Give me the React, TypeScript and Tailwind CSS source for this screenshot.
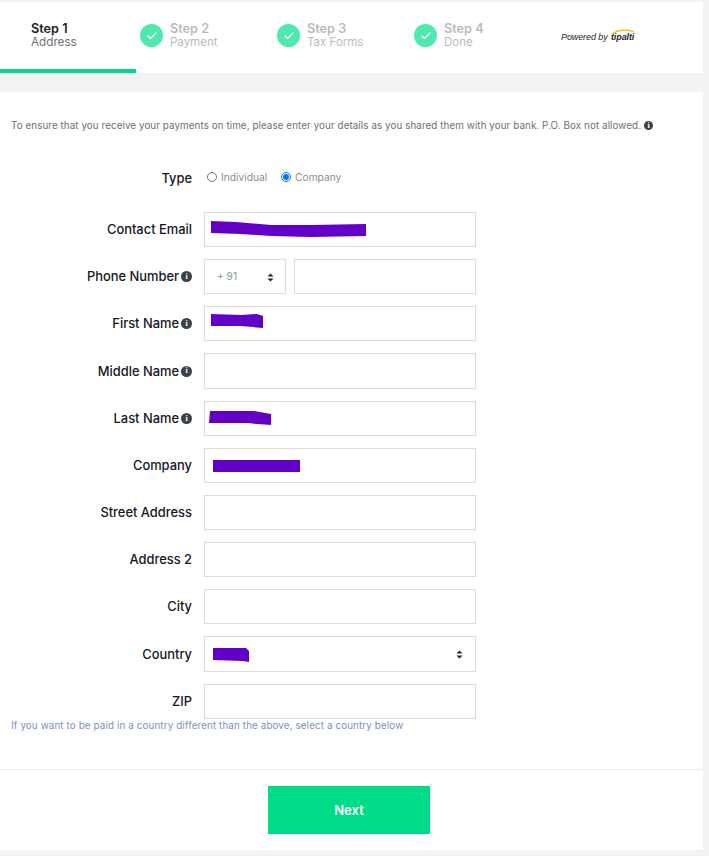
import React from 'react';
import { Check } from 'lucide-react';

const font = "font-['Inter',sans-serif]";

const InfoDot = ({ className = 'w-[11px] h-[11px]' }: { className?: string }) => (
  <span className={`inline-flex rounded-full bg-[#3d4048] items-center justify-center text-white text-[8px] leading-none font-bold font-['Liberation_Serif',serif] ${className}`}>i</span>
);

const Updown = () => (
  <svg width="7" height="9" viewBox="0 0 7 9" className="shrink-0">
    <path d="M3.5 0.5 L6.5 3.6 H0.5 Z M3.5 8.5 L6.5 5.4 H0.5 Z" fill="#1f2329" />
  </svg>
);

const Scribble = ({ d, w, left, top }: { d: string; w: number; left: number; top: number }) => (
  <svg width={w} height="18" viewBox={`0 0 ${w} 18`} className="absolute" style={{ left, top }}>
    <path d={d} fill="#6200c8" />
  </svg>
);

const steps = [
  { title: 'Step 2', sub: 'Payment' },
  { title: 'Step 3', sub: 'Tax Forms' },
  { title: 'Step 4', sub: 'Done' },
];

type RowProps = {
  label: string;
  info?: boolean;
  tall?: boolean;
  children?: React.ReactNode;
};

const Row = ({ label, info, tall, children }: RowProps) => (
  <div className={`flex items-center mb-3 ${tall ? 'h-[36px]' : 'h-[35px]'}`}>
    <div className="w-[192px] shrink-0 pt-[1px] flex items-center justify-end gap-[2px] text-[12.9px] font-[550] text-[#14171f]">
      {label}
      {info && <InfoDot />}
    </div>
    <div className="ml-3 w-[272px] h-full flex gap-2">{children}</div>
  </div>
);

const Box = ({ children }: { children?: React.ReactNode }) => (
  <div className="relative flex-1 h-full border border-[#dcdcdc] bg-white">{children}</div>
);

export default function App() {
  return (
    <div className={`${font} w-[709px] h-[856px] bg-[#f3f3f3] pt-[2px] overflow-hidden`}>
      <div className="w-[703px] h-[71px] bg-white flex relative">
        <div className="w-[136px] h-[71px] border-b-4 border-[#00db87] pl-[31px] pt-[20px]">
          <div className="text-[12.7px] leading-[14px] font-semibold text-[#1d2027]">Step 1</div>
          <div className="text-[11.7px] leading-[13px] text-[#6c7078]">Address</div>
        </div>
        {steps.map((s) => (
          <div key={s.title} className="w-[137px] pl-[4px] pt-[22px] flex">
            <div className="w-[23px] h-[23px] rounded-full bg-[#4fe8ae] flex items-center justify-center">
              <Check size={12} color="#fff" strokeWidth={2.5} />
            </div>
            <div className="ml-[7px] -mt-[2px]">
              <div className="text-[12.7px] leading-[14px] font-semibold text-[#b9bbc0]">{s.title}</div>
              <div className="text-[11.5px] leading-[13px] text-[#b9bbc0]">{s.sub}</div>
            </div>
          </div>
        ))}
        <div className="relative ml-[14px] pt-[30px]">
          <span className="font-['Liberation_Sans',sans-serif] italic text-[9px] leading-[11px] tracking-[-0.1px] text-[#1a1f2b] whitespace-nowrap block">
            Powered by <span className="font-bold ml-[1px]">tipalti</span>
          </span>
          <svg width="24" height="6" viewBox="0 0 24 6" className="absolute left-[50px] top-[27px]">
            <path d="M1 5 C7 0.5 17 0 23 3" stroke="#f5b400" strokeWidth="1.2" fill="none" />
          </svg>
        </div>
      </div>

      <div className="w-[703px] h-[758px] mt-[19px] bg-white relative">
        <p className="absolute left-[11px] top-[27px] text-[9.8px] leading-[13px] tracking-[0.09px] text-[#6b6f76] whitespace-nowrap flex items-center gap-[3px]">
          To ensure that you receive your payments on time, please enter your details as you shared them with your bank. P.O. Box not allowed.
          <InfoDot className="w-[9px] h-[9px]" />
        </p>

        <div className="pt-[120px]">
          <div className="absolute left-0 top-[76px] flex items-start">
            <div className="w-[192px] pt-[1px] text-right text-[12.9px] font-[550] leading-[20px] text-[#14171f]">Type</div>
            <div className="ml-[15px] flex items-center h-[18px] pt-[1px] text-[10.2px] text-[#8a8d93]">
              <input type="radio" name="type" className="w-[10px] h-[10px] m-0 -mt-[1px]" />
              <span className="ml-[4px]">Individual</span>
              <input type="radio" name="type" defaultChecked className="w-[10px] h-[10px] ml-[14px] -mt-[1px]" />
              <span className="ml-[4px]">Company</span>
            </div>
          </div>

          <Row label="Contact Email">
            <Box>
              <Scribble w={156} left={6} top={8} d="M0 0 L25 1 L60 4 L100 4 L155 3 L155 15 L100 16 L60 15 L30 13 L0 12 Z" />
            </Box>
          </Row>
          <Row label="Phone Number" info>
            <div className="w-[82px] h-full border border-[#dcdcdc] flex items-center justify-between pl-[12px] pr-[11px] pt-[1px] text-[10.2px] text-[#7d9a90]">
              + 91
              <Updown />
            </div>
            <Box />
          </Row>
          <Row label="First Name" info>
            <Box>
              <Scribble w={52} left={6} top={7} d="M0 0 L30 1 L46 0 L52 2 L52 14 L30 12 L0 12 Z" />
            </Box>
          </Row>
          <Row label="Middle Name" info tall>
            <Box />
          </Row>
          <Row label="Last Name" info>
            <Box>
              <Scribble w={63} left={4} top={9} d="M1 0 L45 0 L62 3 L62 14 L48 13 L40 12 L0 12 Z" />
            </Box>
          </Row>
          <Row label="Company">
            <Box>
              <Scribble w={88} left={8} top={11} d="M0 0 L87 0 L87 12 L0 12 Z" />
            </Box>
          </Row>
          <Row label="Street Address">
            <Box />
          </Row>
          <Row label="Address 2">
            <Box />
          </Row>
          <Row label="City">
            <Box />
          </Row>
          <Row label="Country" tall>
            <Box>
              <Scribble w={36} left={8} top={11} d="M0 0 L33 0 L36 3 L36 14 L30 13 L0 12 Z" />
              <div className="absolute right-[12px] top-[13px]">
                <Updown />
              </div>
            </Box>
          </Row>
          <Row label="ZIP">
            <Box />
          </Row>
        </div>

        <p className="absolute left-[11px] top-[627px] text-[9.8px] leading-[13px] tracking-[0.13px] text-[#7b8fc4] whitespace-nowrap">
          If you want to be paid in a country different than the above, select a country below
        </p>

        <div className="absolute left-0 right-0 top-[677px] border-t border-[#ececec]" />
        <div className="absolute left-[268px] top-[694px] w-[162px] h-[48px] pt-[1px] bg-[#00db87] flex items-center justify-center text-white text-[13px] font-semibold">
          Next
        </div>
      </div>
    </div>
  );
}
